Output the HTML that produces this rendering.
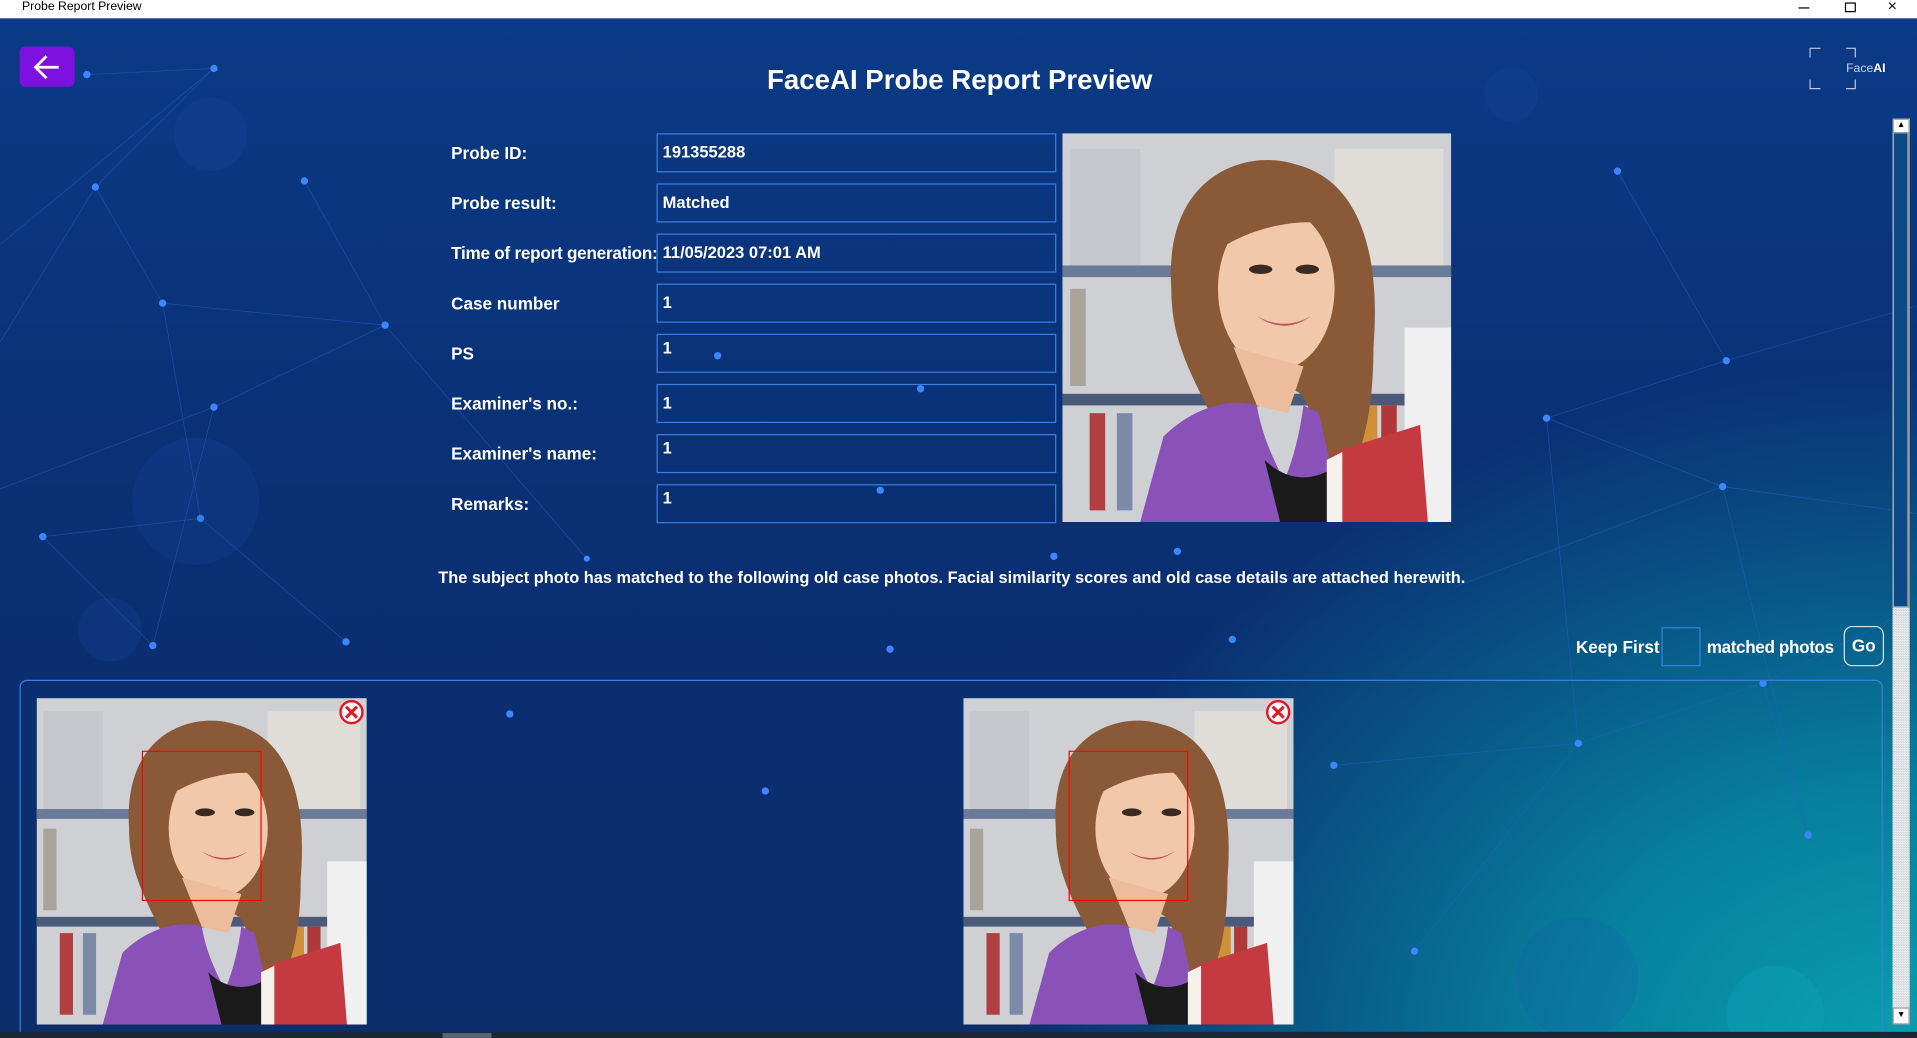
<!DOCTYPE html>
<html><head><meta charset="utf-8"><style>
html,body{margin:0;padding:0;width:1917px;height:1038px;overflow:hidden;background:#0c2f70}
#w{position:absolute;left:0;top:0;width:1568px;height:849px;transform:scale(1.22258);transform-origin:0 0;font-family:"Liberation Sans",Arial,sans-serif;color:#fff;overflow:hidden}
.bg{position:absolute;left:0;top:15px;width:1568px;height:834px;background:radial-gradient(ellipse 950px 720px at 1568px 849px,#0aa0ae 0%,#07809e 30%,rgba(10,60,120,0) 78%),linear-gradient(180deg,#0b3a86 0%,#0a2f73 50%,#0b2d6a 100%)}
.tb{position:absolute;left:0;top:0;width:1568px;height:15px;background:#fff;color:#000;font-size:10px}
.lab{position:absolute;left:369px;font-weight:bold;font-size:14px}
.inp{position:absolute;left:537px;width:327px;height:32px;border:1px solid #3b7fe0;box-sizing:border-box;font-weight:bold;font-size:13.5px;padding:7px 0 0 4px}
.ab{position:absolute}
</style></head><body><div id="w">
<div class="bg"></div>
<svg class="ab" style="left:0;top:15px" width="1568" height="834" viewBox="0 15 1568 834">
<g stroke="#2a62c8" stroke-width="0.6" fill="none" opacity="0.55">
<path d="M71 61 L175 56 L78 153 L0 280 M175 56 L0 200 M78 153 L133 248 L164 424 L35 439 M133 248 L315 266 L175 333 L0 400 M249 148 L315 266 L480 457 M164 424 L283 525 M175 333 L125 528 M35 439 L125 528 M1323 140 L1412 295 L1265 342 L1409 398 L1568 420 M1412 295 L1568 250 M1265 342 L1291 608 L1442 559 L1479 683 M1409 398 L1479 683 M1291 608 L1091 626 M1409 398 L1190 480 M1442 559 L1560 500 M1291 608 L1157 778"/>
</g>
<g fill="#3d86ff">
<circle cx="71" cy="61" r="3"/><circle cx="175" cy="56" r="3"/><circle cx="78" cy="153" r="3"/><circle cx="249" cy="148" r="3"/><circle cx="133" cy="248" r="3"/><circle cx="315" cy="266" r="3"/><circle cx="175" cy="333" r="3"/><circle cx="164" cy="424" r="3"/><circle cx="35" cy="439" r="3"/><circle cx="125" cy="528" r="3"/><circle cx="283" cy="525" r="3"/><circle cx="480" cy="457" r="2.5"/><circle cx="417" cy="584" r="3"/><circle cx="626" cy="647" r="3"/><circle cx="728" cy="531" r="3"/><circle cx="1008" cy="523" r="3"/><circle cx="1323" cy="140" r="3"/><circle cx="1412" cy="295" r="3"/><circle cx="1265" cy="342" r="3"/><circle cx="1409" cy="398" r="3"/><circle cx="1291" cy="608" r="3"/><circle cx="1442" cy="559" r="3"/><circle cx="1479" cy="683" r="3"/><circle cx="1091" cy="626" r="3"/><circle cx="1157" cy="778" r="3"/><circle cx="587" cy="291" r="3"/><circle cx="753" cy="318" r="3"/><circle cx="720" cy="401" r="3"/><circle cx="963" cy="451" r="3"/><circle cx="862" cy="455" r="3"/>
</g>
<g fill="#1a55b0" opacity="0.18"><circle cx="160" cy="410" r="52"/><circle cx="172" cy="110" r="30"/><circle cx="1236" cy="77" r="22"/><circle cx="1452" cy="830" r="40" fill="#10b8c8"/><circle cx="1290" cy="800" r="50"/><circle cx="90" cy="515" r="26"/></g>
</svg>
<div class="tb"><span style="position:absolute;left:18px;top:0px">Probe Report Preview</span>
<span style="position:absolute;left:1471px;top:6px;width:9px;height:1px;background:#000"></span>
<span style="position:absolute;left:1509px;top:2px;width:7px;height:6px;border:1px solid #000"></span>
<span style="position:absolute;left:1544px;top:-3px;font-size:13px">×</span></div>
<div class="ab" style="left:16px;top:38px;width:45px;height:33px;background:#7d12e0;border-radius:5px">
<svg width="45" height="33"><path d="M13 17 H32 M22 8 L13 17 L22 26" stroke="#fff" stroke-width="2.2" fill="none"/></svg></div>
<div class="ab" style="left:0;width:1570px;top:53px;text-align:center;font-weight:bold;font-size:22.6px">FaceAI Probe Report Preview</div>
<svg class="ab" style="left:1480px;top:39px" width="70" height="35"><path d="M0.5 8V0.5H9M30 0.5H37.5V8M0.5 26V33.5H9M30 33.5H37.5V26" stroke="#b8c8e0" fill="none"/><text x="30" y="20" font-size="10" fill="#c8d4e8" font-family="Liberation Sans">Face<tspan font-weight="bold" fill="#fff">AI</tspan></text></svg>
<div class="lab" style="top:117px">Probe ID:</div><div class="inp" style="top:109px">191355288</div>
<div class="lab" style="top:158px">Probe result:</div><div class="inp" style="top:150px">Matched</div>
<div class="lab" style="top:199px;letter-spacing:-0.2px">Time of report generation:</div><div class="inp" style="top:191px">11/05/2023 07:01 AM</div>
<div class="lab" style="top:240px">Case number</div><div class="inp" style="top:232px">1</div>
<div class="lab" style="top:281px">PS</div><div class="inp" style="top:273px;padding-top:3px">1</div>
<div class="lab" style="top:322px">Examiner's no.:</div><div class="inp" style="top:314px">1</div>
<div class="lab" style="top:363px">Examiner's name:</div><div class="inp" style="top:355px;padding-top:3px">1</div>
<div class="lab" style="top:404px">Remarks:</div><div class="inp" style="top:396px;padding-top:3px">1</div>
<svg width="0" height="0" style="position:absolute"><defs>
<g id="wm">
<rect width="100" height="100" fill="#cfd0d4"/>
<rect x="2" y="4" width="18" height="30" fill="#c4c8cc"/><rect x="70" y="4" width="28" height="30" fill="#e0ddd8"/>
<rect x="0" y="34" width="100" height="3" fill="#6a7a98"/><rect x="0" y="67" width="100" height="3" fill="#4c5a7a"/>
<rect x="2" y="40" width="4" height="25" fill="#a8a49c"/><rect x="7" y="72" width="4" height="25" fill="#b04040"/><rect x="14" y="72" width="4" height="25" fill="#7a8aa8"/><rect x="76" y="70" width="5" height="26" fill="#d0903a"/><rect x="82" y="70" width="4" height="26" fill="#b03838"/>
<rect x="88" y="50" width="12" height="50" fill="#f0f0f0"/>
<path d="M28 40 C26 10 48 4 60 8 C76 12 82 30 80 55 C80 75 76 85 72 90 L64 90 C66 70 62 60 52 70 L38 72 C32 60 28 52 28 40Z" fill="#8a5a38"/>
<ellipse cx="55" cy="40" rx="15" ry="21" fill="#f2c8aa"/>
<path d="M40 30 C44 16 62 14 72 24 C66 22 52 22 40 30Z" fill="#8a5a38"/>
<path d="M44 55 L50 70 L58 72 L62 60 Z" fill="#ecbc9c"/>
<path d="M20 100 L26 78 C34 70 44 68 50 70 C52 82 58 90 62 100Z" fill="#8a52b8"/>
<path d="M62 70 L66 72 L70 90 L62 100 L52 100 C56 92 60 85 62 70Z" fill="#8a52b8"/>
<path d="M52 84 C58 90 66 90 72 84 L72 100 L56 100Z" fill="#1a1a1a"/>
<path d="M70 82 L92 75 L94 100 L70 100Z" fill="#c43a40"/><path d="M68 84 L72 82 L72 100 L68 100Z" fill="#f4f0ea"/>
<path d="M50 47 Q57 52 64 47 Q57 51 50 47Z" fill="#c05060"/>
<ellipse cx="51" cy="35" rx="3" ry="1.2" fill="#3a2a22"/><ellipse cx="63" cy="35" rx="3" ry="1.2" fill="#3a2a22"/>
</g></defs></svg>
<svg class="ab" style="left:869px;top:109px" width="318" height="318" viewBox="0 0 100 100" preserveAspectRatio="none"><use href="#wm"/></svg>
<div class="ab" style="left:0;width:1557px;top:465px;text-align:center;font-weight:bold;font-size:13.4px">The subject photo has matched to the following old case photos. Facial similarity scores and old case details are attached herewith.</div>
<div class="ab" style="left:1289px;top:521px;font-weight:bold;font-size:14px">Keep First</div>
<div class="ab" style="left:1359px;top:513px;width:32px;height:32px;border:1px solid #3b7fe0;box-sizing:border-box"></div>
<div class="ab" style="left:1396px;top:521px;font-weight:bold;font-size:14px;letter-spacing:-0.3px">matched photos</div>
<div class="ab" style="left:1508px;top:512px;width:33px;height:33px;border:1px solid #d8e4f0;border-radius:7px;box-sizing:border-box;font-weight:bold;font-size:14px;text-align:center;line-height:31px">Go</div>
<div class="ab" style="left:16px;top:556px;width:1524px;height:300px;border:1px solid #3b7fe0;border-radius:6px;box-sizing:border-box"></div>
<svg class="ab" style="left:30px;top:571px" width="270" height="267" viewBox="0 0 100 100" preserveAspectRatio="none"><use href="#wm"/></svg>
<svg class="ab" style="left:788px;top:571px" width="270" height="267" viewBox="0 0 100 100" preserveAspectRatio="none"><use href="#wm"/></svg>
<div class="ab" style="left:116px;top:614px;width:98px;height:123px;border:1px solid #f00;box-sizing:border-box"></div>
<div class="ab" style="left:874px;top:614px;width:98px;height:123px;border:1px solid #f00;box-sizing:border-box"></div>
<svg class="ab" style="left:277px;top:572px" width="21" height="21"><circle cx="10.5" cy="10.5" r="9" fill="#fff" stroke="#e01828" stroke-width="2"/><path d="M6 6L15 15M15 6L6 15" stroke="#e01828" stroke-width="2.5"/></svg>
<svg class="ab" style="left:1035px;top:572px" width="21" height="21"><circle cx="10.5" cy="10.5" r="9" fill="#fff" stroke="#e01828" stroke-width="2"/><path d="M6 6L15 15M15 6L6 15" stroke="#e01828" stroke-width="2.5"/></svg>
<div class="ab" style="left:1548px;top:97px;width:14px;height:741px;background:repeating-conic-gradient(#c8d0d4 0 25%,#f4f4f4 0 50%) 0 0/2px 2px"></div>
<div class="ab" style="left:1548px;top:97px;width:14px;height:400px;background:#0a4a86;border:1px solid #c0c0c0;box-sizing:border-box;border-right:2px solid #999"></div>
<div class="ab" style="left:1548px;top:97px;width:14px;height:12px;background:#fff;border:1px solid #999;box-sizing:border-box;font-size:7px;color:#000;text-align:center;line-height:10px">▲</div>
<div class="ab" style="left:1548px;top:824px;width:14px;height:14px;background:#fff;border:1px solid #999;box-sizing:border-box;font-size:7px;color:#000;text-align:center;line-height:12px">▼</div>
<div class="ab" style="left:0;top:844px;width:1568px;height:5px;background:#1c2838"></div>
<div class="ab" style="left:362px;top:845px;width:40px;height:4px;background:#5a6678"></div>
</div></body></html>
